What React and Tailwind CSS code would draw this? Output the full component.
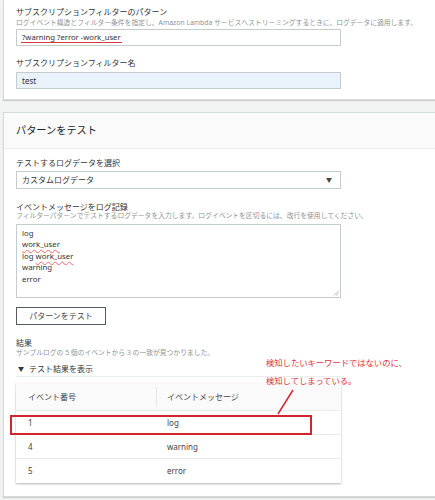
import React from "react";

const font = { fontFamily: '"Noto Sans", "Noto Sans CJK JP", sans-serif' };

const Label = ({ children, className = "" }) => (
  <div className={`h-[10px] text-[8px] leading-[10px] text-[#333] ${className}`}>{children}</div>
);

const Desc = ({ children, className = "" }) => (
  <div className={`h-[8px] text-[6.8px] leading-[8px] text-[#8d9596] whitespace-nowrap ${className}`}>{children}</div>
);

const Squiggle = ({ children }) => (
  <span className="underline decoration-wavy decoration-[#e8676b] decoration-[0.5px] underline-offset-[1.5px]">
    {children}
  </span>
);

const rows = [
  { no: "1", msg: "log" },
  { no: "4", msg: "warning" },
  { no: "5", msg: "error" },
];

export default function App() {
  return (
    <div
      className="relative w-[435px] h-[500px] overflow-hidden bg-[#f2f3f3] pl-[3px]"
      style={font}
    >
      {/* サブスクリプションフィルター */}
      <div className="bg-white border-l border-b border-[#d5dbdb] shadow-[0_1px_1px_rgba(0,0,0,0.15)] pl-[12px] pt-[7px] pb-[10px]">
        <Label>サブスクリプションフィルターのパターン</Label>
        <Desc className="mt-[2px]">
          ログイベント構造とフィルター条件を指定し、Amazon Lambda サービスへストリーミングするときに、ログデータに適用します。
        </Desc>
        <div className="mt-[2px] w-[325px] h-[17px] border border-[#c6cccc] bg-white flex items-center pl-[4px]">
          <span className="text-[7.7px] leading-[10px] text-[#333] border-b border-[#d63a3a] px-[1px]">
            ?warning ?error -work_user
          </span>
        </div>
        <Label className="mt-[12px]">サブスクリプションフィルター名</Label>
        <div className="mt-[4px] w-[325px] h-[17px] border border-[#c6cccc] bg-[#eaf2fb] flex items-center pl-[5px] text-[8px] text-[#333]">
          test
        </div>
      </div>

      {/* パターンをテスト */}
      <div className="mt-[12px] bg-white border-l border-b border-t border-[#d5dbdb] shadow-[0_1px_1px_rgba(0,0,0,0.15)] h-[385px]">
        <div className="h-[36px] bg-[#fafafa] border-b border-[#eaeded] flex items-center pl-[12px] text-[10.2px] text-[#222]">
          パターンをテスト
        </div>
        <div className="pl-[12px] pt-[9px] relative">
          <Label>テストするログデータを選択</Label>
          <div className="mt-[3px] w-[325px] h-[18px] border border-[#c6cccc] bg-white flex items-center justify-between pl-[5px] pr-[8px] text-[8px] text-[#333]">
            <span>カスタムログデータ</span>
            <span className="text-[6px] text-[#444]">▼</span>
          </div>

          <Label className="mt-[13px]">イベントメッセージをログ記録</Label>
          <Desc>フィルターパターンでテストするログデータを入力します。ログイベントを区切るには、改行を使用してください。</Desc>
          <div className="relative mt-[4px] w-[325px] h-[74px] border border-[#c6cccc] bg-white pl-[5px] pt-[3px] text-[7.8px] leading-[11.4px] text-[#333]">
            <div>log</div>
            <div>
              <Squiggle>work_user</Squiggle>
            </div>
            <div>
              log <Squiggle>work_user</Squiggle>
            </div>
            <div>warning</div>
            <div>error</div>
            <svg className="absolute right-[1px] bottom-[1px]" width="6" height="6" viewBox="0 0 6 6">
              <path d="M5.5 1 L1 5.5 M5.5 3.5 L3.5 5.5" stroke="#999" strokeWidth="0.7" />
            </svg>
          </div>

          <div className="mt-[9px] w-[90px] h-[18px] border border-[#545b64] bg-white flex items-center justify-center text-[8px] text-[#444]">
            パターンをテスト
          </div>

          <Label className="mt-[13px]">結果</Label>
          <Desc className="mt-[1px]">サンプルログの 5 個のイベントから 3 の一致が見つかりました。</Desc>
          <div className="mt-[7px] w-[325px] pb-[2px] border-b border-[#eaeded]">
            <div className="h-[10px] flex items-center text-[8px] text-[#333] pl-[2px]">
              <span className="text-[6px] mr-[5px]">▼</span>
              <span>テスト結果を表示</span>
            </div>
          </div>

          {/* テーブル */}
          <div className="relative mt-[6px] w-[325px] bg-white shadow-[0_1px_2px_rgba(0,0,0,0.3)]">
            <div className="h-[28px] bg-[#fafafa] border-b border-[#eaeded] flex items-center text-[8px] text-[#444]">
              <div className="w-[140px] pl-[12px]">イベント番号</div>
              <div className="h-[20px] border-l border-[#e3e6e6]"></div>
              <div className="pl-[10px]">イベントメッセージ</div>
            </div>
            {rows.map((r, i) => (
              <div
                key={r.no}
                className={`h-[24px] flex items-center text-[8px] text-[#444] ${i < rows.length - 1 ? "border-b border-[#eaeded]" : ""}`}
              >
                <div className="w-[141px] pl-[12px]">{r.no}</div>
                <div className="pl-[10px]">{r.msg}</div>
              </div>
            ))}
            {/* 赤枠 */}
            <div className="absolute left-[-6px] top-[32px] w-[302px] h-[20px] border-2 border-[#d4252f]"></div>
          </div>
        </div>
      </div>

      {/* 注釈 */}
      <div className="absolute left-[266px] top-[354px] text-[8.3px] leading-[18px] text-[#e0313b] whitespace-nowrap">
        <div>検知したいキーワードではないのに、</div>
        <div>検知してしまっている。</div>
      </div>
      <svg className="absolute left-0 top-0" width="435" height="500" style={{ pointerEvents: "none" }}>
        <line x1="293" y1="390" x2="278" y2="414" stroke="#d4252f" strokeWidth="1.5" />
      </svg>
    </div>
  );
}
